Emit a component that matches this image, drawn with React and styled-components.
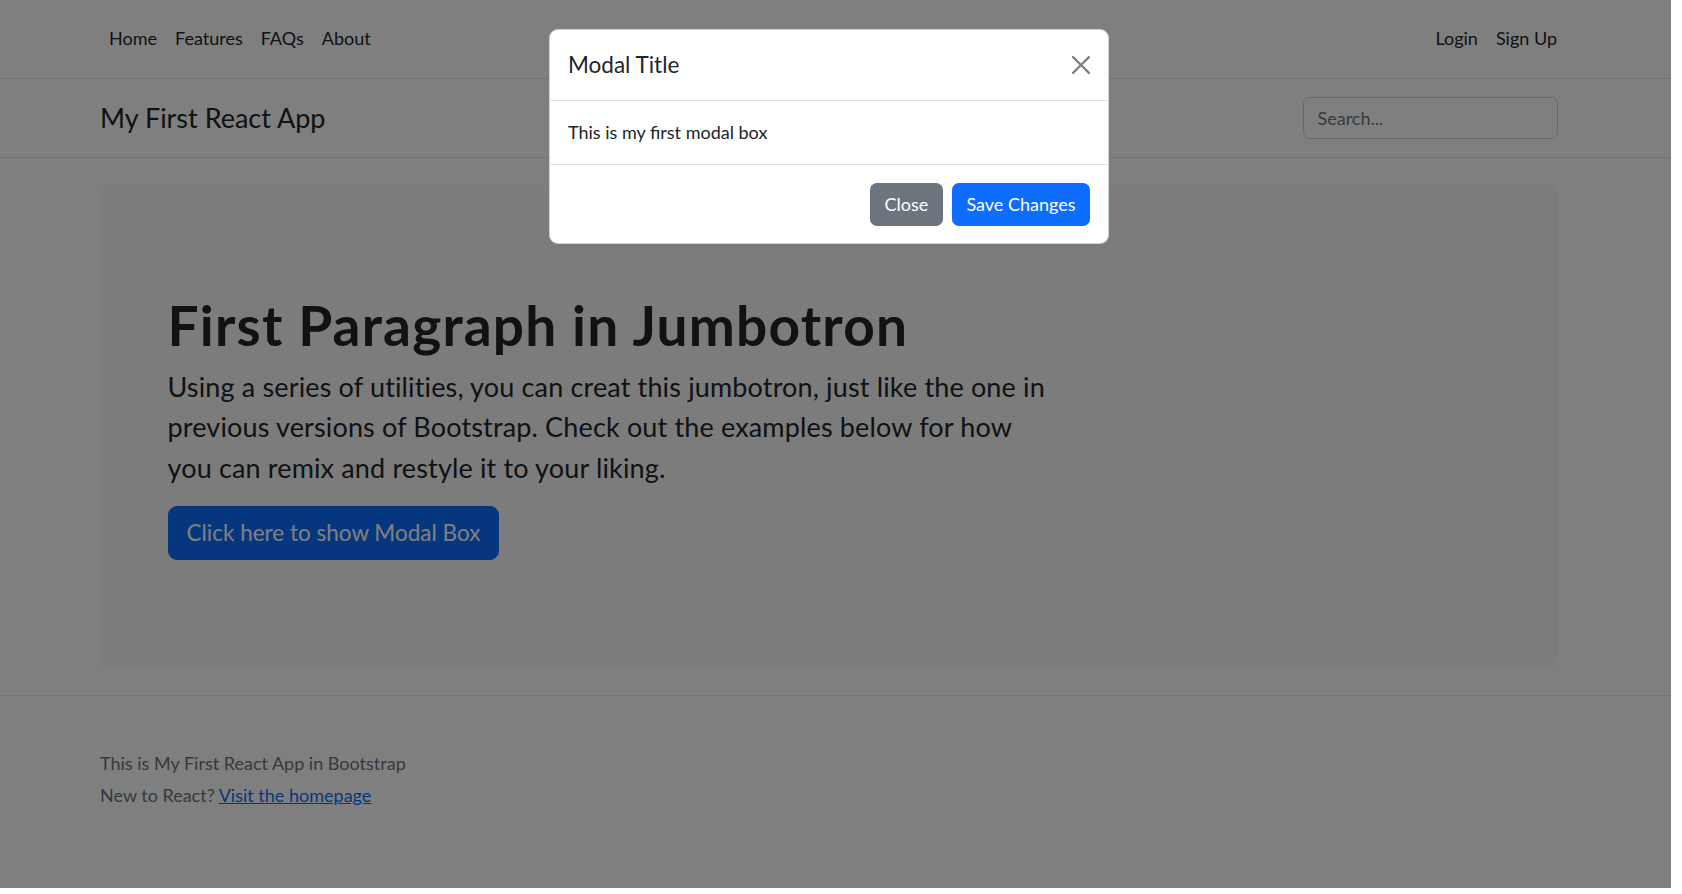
import React from 'react';
import styled, {createGlobalStyle} from 'styled-components';

const FONT = `"Segoe UI", Lato, "Liberation Sans", sans-serif`;

// bootstrap sets this on the page while a modal is open
const SCROLLBAR = '13px';

const GlobalStyle = createGlobalStyle`
html, body {
    margin: 0;
    padding: 0;
    background: #fff;
}
body {
    font-family: ${FONT};
}
`

const Frame = styled.div`
position: relative;
width: 1671px;
height: 888px;
overflow: hidden;
background: #fff;
color: #212529;
font-family: ${FONT};
font-size: 18px;
line-height: 1.5;
`

const Container = styled.div`
width: 1458px;
margin: 0 auto;
display: flex;
align-items: center;
`

const TopNav = styled.nav`
padding: 16px ${SCROLLBAR} 17px 0;
border-bottom: 1px solid #dee2e6;
`
const NavList = styled.ul`
display: flex;
list-style: none;
margin: 0;
padding: 0;
margin-right: ${props => props.$end ? '-8px' : 'auto'};
`
const NavLink = styled.a`
display: block;
padding: 9px;
line-height: 27px;
color: #212529;
text-decoration: none;
`

const Header = styled.header`
padding: 18px ${SCROLLBAR} 18px 0;
border-bottom: 1px solid #dee2e6;
`
const Brand = styled.a`
font-size: 27px;
line-height: 40px;
color: #212529;
text-decoration: none;
margin-right: auto;
`
const Search = styled.input`
width: 255px;
height: 42px;
box-sizing: border-box;
padding: 6px 13.5px;
font-family: ${FONT};
font-size: 18px;
color: #212529;
border: 1px solid #ced4da;
border-radius: 6.75px;
background: #fff;
outline: none;
&::placeholder {
    color: #6c757d;
}
`

const Main = styled.main`
padding: 27px ${SCROLLBAR} 0 0;
`
const Jumbotron = styled.div`
width: 1458px;
box-sizing: border-box;
margin: 0 auto 27px;
padding: 108px 67.5px;
background: #f8f9fa;
border-radius: 9px;
`
const Display = styled.h1`
margin: 0 0 9px;
font-size: 55px;
font-weight: 700;
letter-spacing: 1.2px;
line-height: 64.8px;
`
const Lead = styled.p`
margin: 0 0 18px;
font-size: 27px;
line-height: 40.5px;
letter-spacing: 0.15px;
white-space: nowrap;
`
const BigButton = styled.button`
font-family: ${FONT};
font-size: 22.5px;
line-height: 1.5;
padding: 9px 18px;
color: #fff;
background: #0d6efd;
border: 1px solid #0d6efd;
border-radius: 9px;
cursor: pointer;
`

const Footer = styled.footer`
border-top: 1px solid #dee2e6;
padding: 54px ${SCROLLBAR} 54px 0;
color: #6c757d;
`
const FooterInner = styled.div`
width: 1458px;
margin: 0 auto;
`
const FooterLine = styled.p`
margin: 0 0 4.5px;
`
const Link = styled.a`
color: #0d6efd;
text-decoration: underline;
`

const Backdrop = styled.div`
position: absolute;
inset: 0;
background: rgba(0, 0, 0, 0.5);
`
const ModalLayer = styled.div`
position: absolute;
inset: 0;
padding: 29px ${SCROLLBAR} 0 0;
display: flex;
justify-content: center;
align-items: flex-start;
`
const ModalBox = styled.div`
width: 560px;
box-sizing: border-box;
background: #fff;
border: 1px solid rgba(0, 0, 0, 0.175);
border-radius: 9px;
`
const ModalHeader = styled.div`
display: flex;
align-items: center;
padding: 18px;
border-bottom: 1px solid #dee2e6;
`
const ModalTitle = styled.h5`
margin: 0;
font-size: 22.5px;
font-weight: 400;
line-height: 33.75px;
`
const CloseX = styled.button`
width: 27px;
height: 27px;
padding: 4.5px;
margin: -9px -4px -9px auto;
border: 0;
background: transparent;
opacity: 0.5;
display: flex;
align-items: center;
justify-content: center;
cursor: pointer;
`
const ModalBody = styled.div`
padding: 18px;
`
const ModalFooter = styled.div`
display: flex;
justify-content: flex-end;
gap: 9px;
padding: 18px 18px 17px;
border-top: 1px solid #dee2e6;
`
const Button = styled.button`
font-family: ${FONT};
font-size: 18px;
line-height: 27px;
padding: 7px 13.5px;
color: #fff;
background: ${props => props.$variant === 'primary' ? '#0d6efd' : '#6c757d'};
border: 1px solid ${props => props.$variant === 'primary' ? '#0d6efd' : '#6c757d'};
border-radius: 6.75px;
cursor: pointer;
`

function App() {
    return (
        <>
            <GlobalStyle/>
            <Frame>
                <TopNav>
                    <Container>
                        <NavList>
                            <li><NavLink href="#">Home</NavLink></li>
                            <li><NavLink href="#">Features</NavLink></li>
                            <li><NavLink href="#">FAQs</NavLink></li>
                            <li><NavLink href="#">About</NavLink></li>
                        </NavList>
                        <NavList $end>
                            <li><NavLink href="#">Login</NavLink></li>
                            <li><NavLink href="#">Sign Up</NavLink></li>
                        </NavList>
                    </Container>
                </TopNav>
                <Header>
                    <Container>
                        <Brand href="#">My First React App</Brand>
                        <Search type="search" placeholder="Search..."/>
                    </Container>
                </Header>
                <Main>
                    <Jumbotron>
                        <Display>First Paragraph in Jumbotron</Display>
                        <Lead>
                            Using a series of utilities, you can creat this jumbotron, just like the one in<br/>
                            previous versions of Bootstrap. Check out the examples below for how<br/>
                            you can remix and restyle it to your liking.
                        </Lead>
                        <BigButton>Click here to show Modal Box</BigButton>
                    </Jumbotron>
                </Main>
                <Footer>
                    <FooterInner>
                        <FooterLine>This is My First React App in Bootstrap</FooterLine>
                        <FooterLine>New to React? <Link href="#">Visit the homepage</Link></FooterLine>
                    </FooterInner>
                </Footer>

                <Backdrop/>
                <ModalLayer>
                    <ModalBox>
                        <ModalHeader>
                            <ModalTitle>Modal Title</ModalTitle>
                            <CloseX aria-label="Close">
                                <svg width="18" height="18" viewBox="0 0 16 16" fill="#000">
                                    <path d="M.293.293a1 1 0 0 1 1.414 0L8 6.586 14.293.293a1 1 0 1 1 1.414 1.414L9.414 8l6.293 6.293a1 1 0 0 1-1.414 1.414L8 9.414l-6.293 6.293a1 1 0 0 1-1.414-1.414L6.586 8 .293 1.707a1 1 0 0 1 0-1.414z"/>
                                </svg>
                            </CloseX>
                        </ModalHeader>
                        <ModalBody>This is my first modal box</ModalBody>
                        <ModalFooter>
                            <Button>Close</Button>
                            <Button $variant="primary">Save Changes</Button>
                        </ModalFooter>
                    </ModalBox>
                </ModalLayer>
            </Frame>
        </>
    );
}

export default App;
